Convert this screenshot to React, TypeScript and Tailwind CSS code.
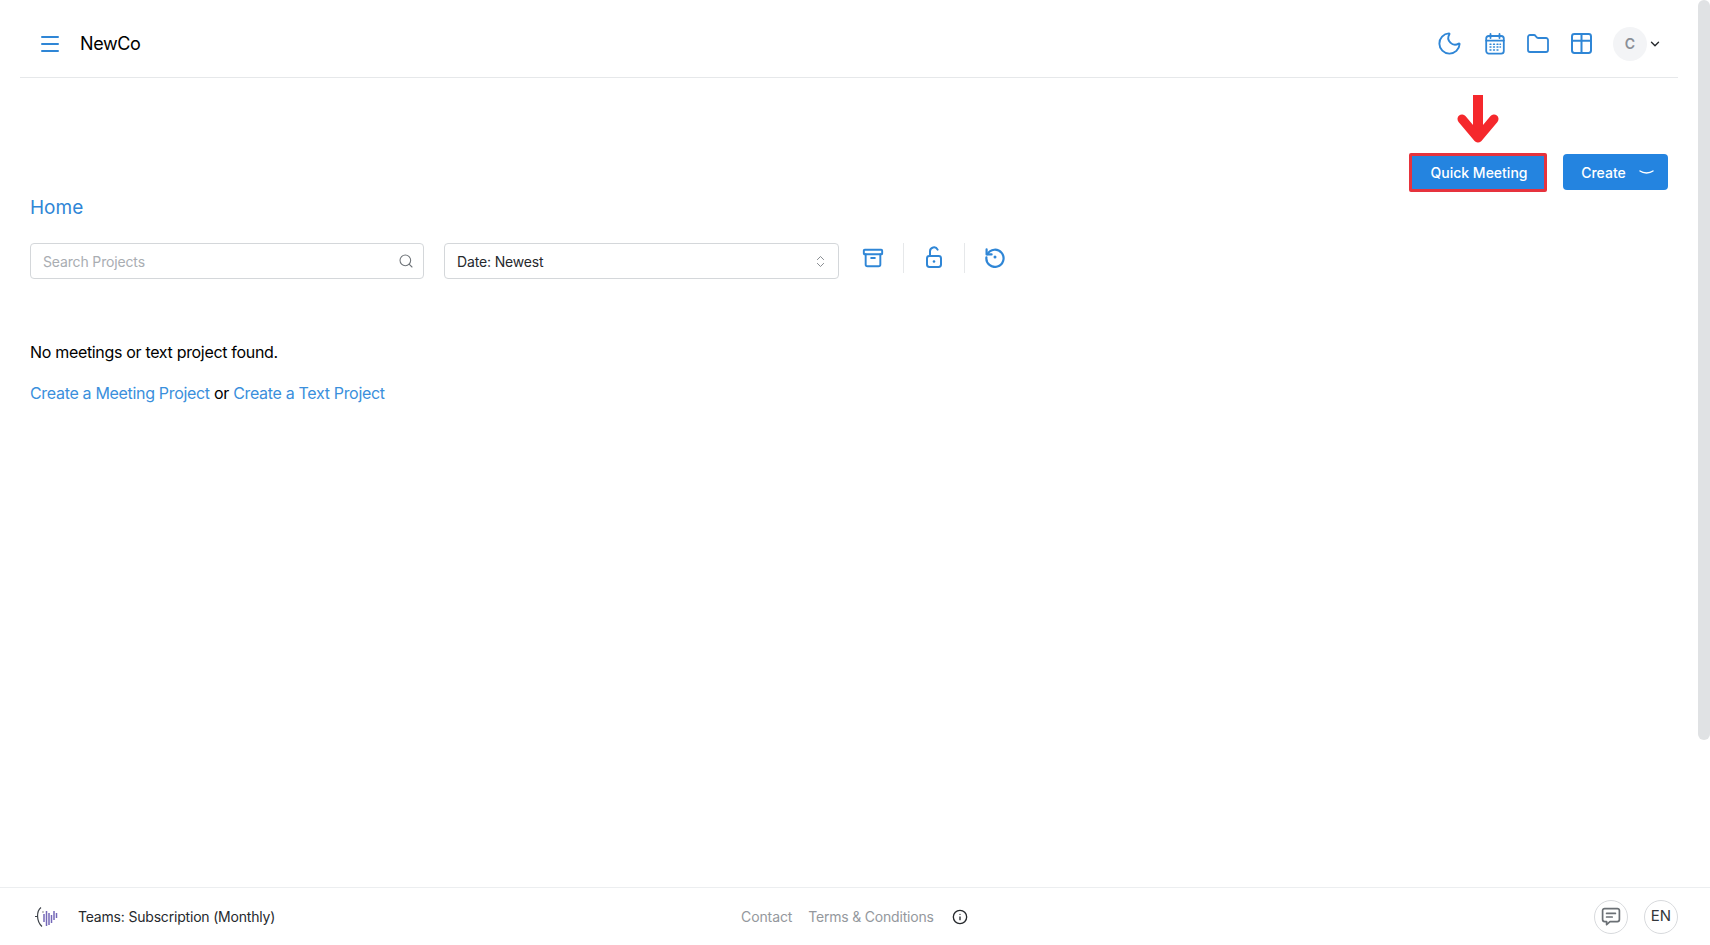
import { Archive, ChevronDown, ChevronsUpDown, Folder, Info, Moon, Search } from 'lucide-react'

function MenuIcon() {
  return (
    <svg width="18" height="16" viewBox="0 0 18 16" fill="none" stroke="#2f86d6" strokeWidth="2" strokeLinecap="round">
      <path d="M1 1h16M1 8h16M1 15h16" />
    </svg>
  )
}

function CalendarIcon() {
  return (
    <svg width="20" height="22" viewBox="0 0 20 22" fill="none" stroke="#2f86d6" strokeWidth="1.8" strokeLinecap="round">
      <rect x="1.2" y="3" width="17.6" height="17.6" rx="2.6" />
      <path d="M5.5 1v4M14.5 1v4M1.2 7.6h17.6" />
      <path d="M5 11.2h1M8.5 11.2h1M12 11.2h1M15 11.2h.5M5 14h1M8.5 14h1M12 14h1M15 14h.5M5 17h1M8.5 17h1M12 17h1" strokeWidth="1.4" />
    </svg>
  )
}

function TableIcon() {
  return (
    <svg width="21" height="21" viewBox="0 0 21 21" fill="none" stroke="#2f86d6" strokeWidth="2">
      <rect x="1" y="1" width="19" height="19" rx="2.4" />
      <path d="M1 7.8h19M10.5 1v19" />
    </svg>
  )
}

function LockIcon() {
  return (
    <svg width="18" height="22" viewBox="0 0 18 22" fill="none" stroke="#2f86d6" strokeWidth="2" strokeLinecap="round" strokeLinejoin="round">
      <rect x="2" y="10" width="14" height="11" rx="2.4" />
      <path d="M5 10V5.4a4 4 0 0 1 7.6-1.8" />
      <circle cx="9" cy="15.5" r="1.3" fill="#2f86d6" stroke="none" />
    </svg>
  )
}

function RestoreIcon() {
  return (
    <svg width="22" height="22" viewBox="0 0 22 22" fill="none" stroke="#2f86d6" strokeWidth="2.2" strokeLinecap="round" strokeLinejoin="round">
      <path d="M3.4 8.2A8.6 8.6 0 1 1 2.4 11.4" />
      <path d="M2.6 3.4v5h5" />
      <circle cx="11" cy="11" r="1.5" fill="#2f86d6" stroke="none" />
    </svg>
  )
}

function ChatIcon() {
  return (
    <svg width="20" height="20" viewBox="0 0 20 20" fill="none" stroke="#6b7075" strokeWidth="1.7" strokeLinejoin="round" strokeLinecap="round">
      <path d="M3.6 1.6h12.8a2 2 0 0 1 2 2v9a2 2 0 0 1-2 2H9l-3.4 3v-3H3.6a2 2 0 0 1-2-2v-9a2 2 0 0 1 2-2Z" />
      <path d="M5.6 6.4h8.8M5.6 10h5.6" />
    </svg>
  )
}

function DownArrow() {
  return (
    <svg width="42" height="50" viewBox="0 0 42 50" fill="none" stroke="#f5282c" strokeLinejoin="round">
      <path d="M21 1v40" strokeWidth="10" strokeLinecap="butt" />
      <path d="M5 25 21 44 37 25" strokeWidth="9" strokeLinecap="round" />
    </svg>
  )
}

function Logo() {
  const bars = [
    [10, 9, 17],
    [12.5, 6, 21],
    [15, 8, 20],
    [17.5, 10, 18],
    [20, 6, 15],
    [22.5, 8, 13],
  ]
  return (
    <svg width="26" height="24" viewBox="0 0 26 24" fill="none">
      <path d="M7 2.5C2.5 6 2 16 8 21.5" stroke="#3c4148" strokeWidth="1.2" />
      <path d="M1 11.5h2M9 6.5v1" stroke="#3c4148" strokeWidth="1.2" />
      {bars.map(([x, top, bottom]) => (
        <path key={x} d={`M${x} ${top}V${bottom}`} stroke="#7468b8" strokeWidth="1.5" />
      ))}
    </svg>
  )
}

export default function App() {
  return (
    <div className="relative flex h-[945px] flex-col overflow-hidden bg-white font-['Inter',sans-serif] text-black">
      <div className="absolute right-0 top-0 h-[740px] w-3 rounded-md bg-[#e0e2e4]" />

      <header className="ml-5 mr-[32px] flex h-[78px] shrink-0 items-center border-b border-[#e6e8ea] pl-[21px] pr-[16px] pt-[10px]">
        <MenuIcon />
        <span className="ml-[21px] text-[18px] font-normal tracking-[-0.4px]">NewCo</span>
        <div className="ml-auto flex items-center">
          <Moon size={27} strokeWidth={1.7} color="#2f86d6" />
          <span className="ml-[22px] flex"><CalendarIcon /></span>
          <span className="ml-[21px] flex"><Folder size={24} strokeWidth={1.8} color="#2f86d6" /></span>
          <span className="ml-[21px] flex"><TableIcon /></span>
          <div className="ml-[21px] flex h-[34px] w-[34px] items-center justify-center rounded-full bg-[#f3f4f6] text-[14px] font-semibold text-[#8a8f96]">
            C
          </div>
          <ChevronDown size={14} strokeWidth={2.4} color="#25282c" className="ml-[1px]" />
        </div>
      </header>

      <main className="flex-1 px-[30px]">
        <div className="flex h-[114px] items-end justify-end gap-[16px] pr-[12px]">
          <div className="flex flex-col items-center">
            <DownArrow />
            <button className="mt-[9px] h-[39px] w-[138px] rounded-[2px] border-[3px] border-[#e6333d] bg-[#2484e0] pl-[2px] text-[14px] font-medium text-white">
              Quick Meeting
            </button>
          </div>
          <button className="mb-[2px] flex h-[36px] w-[105px] items-center justify-center gap-[13px] rounded-[4px] bg-[#2484e0] pl-[4px] text-[14px] font-medium text-white">
            Create
            <svg width="15" height="5" viewBox="0 0 15 5" fill="none" stroke="white" strokeWidth="1.4" strokeLinecap="round">
              <path d="M1 1c3.5 2.6 9.5 2.6 13 0" />
            </svg>
          </button>
        </div>

        <h1 className="mt-[2px] text-[19px] leading-[28px] text-[#2f86d6]">Home</h1>

        <div className="mt-[21px] flex items-start">
          <div className="flex h-[36px] w-[394px] items-center justify-between rounded-[4px] border border-[#d4d7da] pl-[12px] pr-[9px]">
            <span className="text-[14px] tracking-[-0.15px] text-[#a9adb2]">Search Projects</span>
            <Search size={16} strokeWidth={1.6} color="#6f7479" />
          </div>
          <div className="ml-[20px] flex h-[36px] w-[395px] items-center justify-between rounded-[4px] border border-[#d4d7da] pl-[12px] pr-[10px]">
            <span className="text-[14px] tracking-[-0.15px] text-[#26292d]">Date: Newest</span>
            <ChevronsUpDown size={15} strokeWidth={1.4} color="#777c81" />
          </div>
          <div className="ml-[23px] flex h-[30px] items-center">
            <Archive size={22} strokeWidth={2.1} color="#2f86d6" />
            <span className="ml-[19px] h-[30px] w-px bg-[#e6e8ea]" />
            <span className="mb-[2px] ml-[21px] flex"><LockIcon /></span>
            <span className="ml-[21px] h-[30px] w-px bg-[#e6e8ea]" />
            <span className="mb-[2px] ml-[19px] flex"><RestoreIcon /></span>
          </div>
        </div>

        <p className="mt-[61px] text-[16px] leading-[24px] tracking-[-0.32px]">No meetings or text project found.</p>
        <p className="mt-[17px] text-[16px] leading-[24px] tracking-[-0.32px]">
          <span className="text-[#3a8fdc]">Create a Meeting Project</span> or{' '}
          <span className="text-[#3a8fdc]">Create a Text Project</span>
        </p>
      </main>

      <footer className="flex h-[58px] shrink-0 items-center border-t border-[#eceef0] pl-[34px] pr-[32px]">
        <div className="flex w-[707px] items-center">
          <Logo />
          <span className="ml-[18px] text-[14px] tracking-[-0.19px] text-[#26292d]">Teams: Subscription (Monthly)</span>
        </div>
        <span className="text-[14px] tracking-[-0.1px] text-[#94989d]">Contact</span>
        <span className="ml-[16px] text-[14px] tracking-[-0.2px] text-[#94989d]">Terms &amp; Conditions</span>
        <Info size={16} strokeWidth={2} color="#25282c" className="ml-[18px]" />
        <div className="ml-auto flex items-center gap-[16px]">
          <div className="flex h-[34px] w-[34px] items-center justify-center rounded-full border border-[#d8dadd]">
            <ChatIcon />
          </div>
          <div className="flex h-[34px] w-[34px] items-center justify-center rounded-full border border-[#d8dadd] text-[15px] text-[#33373b]">
            EN
          </div>
        </div>
      </footer>
    </div>
  )
}
